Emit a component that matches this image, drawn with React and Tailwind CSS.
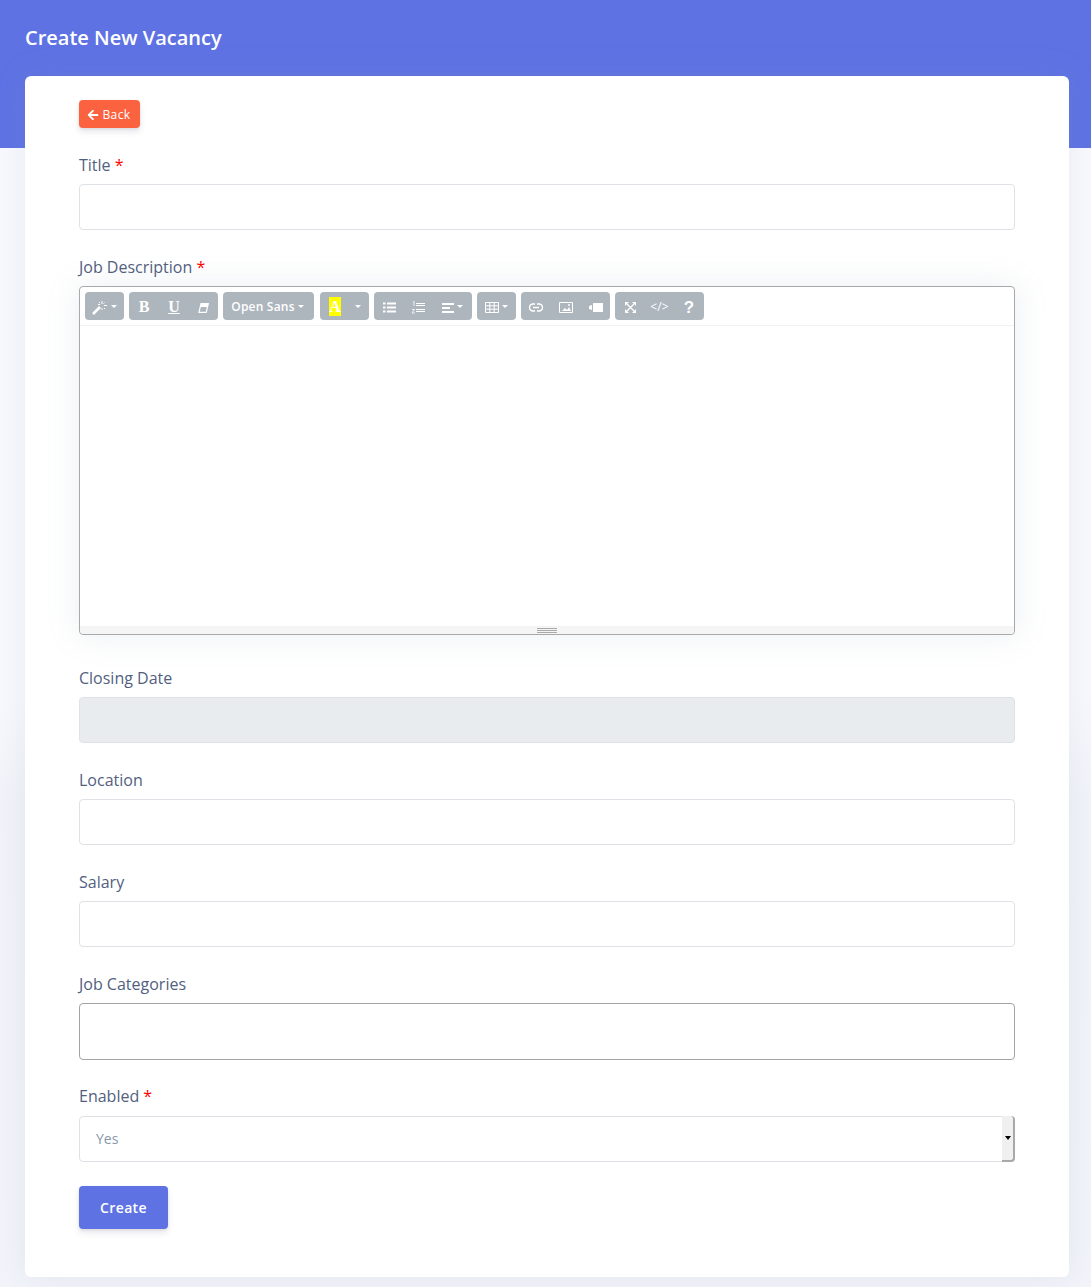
import React from "react";
import { FaArrowLeft } from "react-icons/fa";

const Caret = () => <span className="ml-[3px] inline-block w-0 h-0 border-x-[3px] border-x-transparent border-t-[3px] border-t-white" />;

function Group({ width, children }) {
  return (
    <div className={`flex items-center h-7 rounded-[4px] bg-[#adb5bd] text-white shrink-0 ${width}`}>{children}</div>
  );
}

function Btn({ className = "", children }) {
  return <span className={`flex items-center justify-center h-full pt-px ${className}`}>{children}</span>;
}

function Label({ text, required, flush }) {
  return (
    <label className={`block h-6 mb-2 text-[16px] leading-6 text-[#525f7f] ${flush ? "" : "pt-px"}`}>
      {text}
      {required && <span className="text-[#ff0000]"> *</span>}
    </label>
  );
}

function TextInput({ disabled }) {
  return (
    <input
      type="text"
      disabled={disabled}
      className={`block w-full h-[46px] rounded-[4px] border border-[#dee2e6] outline-none ${disabled ? "bg-[#e9ecef]" : "bg-white"}`}
    />
  );
}

const Ico = ({ w, h, children }) => (
  <svg viewBox={`0 0 ${w} ${h}`} width={w} height={h} className="translate-y-px" fill="none" stroke="white">
    {children}
  </svg>
);

export default function App() {
  return (
    <div className="min-h-[1287px] bg-[linear-gradient(to_bottom,#f8f9fe_0,#f8f9fe_700px,#f1f3f9_800px,#f2f4fa_100%)] font-['Open_Sans',sans-serif]">
      <header className="h-[148px] bg-[#5e72e4] px-[25px] pt-[23px]">
        <h1 className="text-[20px] leading-[30px] font-semibold text-white">Create New Vacancy</h1>
      </header>
      <main className="ml-[25px] -mt-[72px] relative w-[1044px] h-[1201px] rounded-[6px] bg-white px-[54px] pt-6 pb-12 shadow-[0_0_32px_rgba(136,152,170,0.15)]">
        <button className="flex items-center justify-center w-[61px] h-7 pt-px pr-px rounded-[4px] bg-[#fb6340] text-white text-[12px] font-medium tracking-[0.4px] shadow-[0_4px_6px_rgba(50,50,93,0.11),0_1px_3px_rgba(0,0,0,0.08)]">
          <FaArrowLeft className="w-3 h-3 mr-[3px]" />
          Back
        </button>

        <div className="mt-6">
          <Label text="Title" required />
          <TextInput />
        </div>

        <div className="mt-6">
          <Label text="Job Description" required />
          <div className="h-[349px] rounded-[4px] border border-[#a9a9a9] flex flex-col bg-white shadow-[0_0_32px_rgba(136,152,170,0.17)]">
            <div className="h-[39px] shrink-0 border-b border-[#f2f2f2] flex gap-[5px] pl-[5px] pt-[5px]">
              <Group width="w-[39px]">
                <Btn className="w-full">
                  <Ico w={16} h={15}>
                    <path d="M1 14l7-7" strokeWidth="2.6" />
                    <path d="M10 1v3M10 8v2M6 4.5h2M12 5.5h3M7 2l1 1M12.5 2.5l-1 1M12 8l1 1" strokeWidth="1" />
                  </Ico>
                  <Caret />
                </Btn>
              </Group>
              <Group width="w-[89px]">
                <Btn className="w-[30px] font-['Liberation_Serif',serif] font-bold text-[16px]">B</Btn>
                <Btn className="w-[30px] font-['Liberation_Serif',serif] font-bold text-[16px] underline">U</Btn>
                <Btn className="w-[29px]">
                  <Ico w={11} h={10}>
                    <path d="M3 .7h7.3L8.2 9.3H1z" strokeWidth="1.2" />
                    <path d="M3 .7h7.3L9.4 4H2z" fill="white" stroke="none" />
                  </Ico>
                </Btn>
              </Group>
              <Group width="w-[91px]">
                <Btn className="w-full text-[12px] font-semibold tracking-[0.2px] pr-[2px]">Open Sans<Caret /></Btn>
              </Group>
              <Group width="w-[49px] ml-px">
                <Btn className="w-[30px]">
                  <span className="w-3 h-[19px] bg-[#ffff00] flex items-center justify-center font-['Liberation_Serif',serif] font-bold text-[16px] leading-none text-white">A</span>
                </Btn>
                <Btn className="w-[13px]"><Caret /></Btn>
              </Group>
              <Group width="w-[98px]">
                <Btn className="w-[30px]">
                  <Ico w={13} h={11}>
                    <path d="M0 1.5h2.5M0 5.5h2.5M0 9.5h2.5M4 1.5h9M4 5.5h9M4 9.5h9" strokeWidth="2" />
                  </Ico>
                </Btn>
                <Btn className="w-[29px]">
                  <Ico w={13} h={13}>
                    <path d="M4 2.5h9M4 4.5h9M4 8.5h9M4 10.5h9" strokeWidth="1" />
                    <path d="M1 1l1-.5V5M0 8.5h2.5L0 12h3" strokeWidth=".8" />
                  </Ico>
                </Btn>
                <Btn className="w-[38px]">
                  <Ico w={12} h={10}>
                    <path d="M0 1h12M0 5h8M0 9h12" strokeWidth="2" />
                  </Ico>
                  <Caret />
                </Btn>
              </Group>
              <Group width="w-[39px]">
                <Btn className="w-full pr-px">
                  <Ico w={14} h={11}>
                    <path d="M.5.5h13v10H.5zM.5 3.8h13M.5 7.2h13M4.8.5v10M9.2.5v10" strokeWidth="1" />
                  </Ico>
                  <Caret />
                </Btn>
              </Group>
              <Group width="w-[89px]">
                <Btn className="w-[30px]">
                  <Ico w={14} h={9}>
                    <path d="M6 1H4a3.5 3.5 0 000 7h2M8 1h2a3.5 3.5 0 010 7H8M4 4.5h6" strokeWidth="1.5" />
                  </Ico>
                </Btn>
                <Btn className="w-[30px]">
                  <Ico w={14} h={11}>
                    <path d="M.5.5h13v10H.5z" strokeWidth="1" />
                    <path d="M3 9l3-3 2 2 2-3 2 4z" fill="white" stroke="none" />
                    <circle cx="10" cy="3" r="1" fill="white" stroke="none" />
                  </Ico>
                </Btn>
                <Btn className="w-[29px]">
                  <svg viewBox="0 0 14 9" className="w-[14px] h-[9px] translate-y-px" fill="white">
                    <path d="M4 0h10v9H4zM0 3l3-1v5l-3-1z" />
                  </svg>
                </Btn>
              </Group>
              <Group width="w-[89px]">
                <Btn className="w-[30px]">
                  <Ico w={11} h={11}>
                    <path d="M2 2l7 7M9 2l-7 7" strokeWidth="1.3" />
                    <path d="M0 0h4L0 4zM11 0H7l4 4zM0 11h4L0 7zM11 11H7l4-4z" fill="white" stroke="none" />
                  </Ico>
                </Btn>
                <Btn className="w-[29px] text-[12px] font-normal tracking-[0.2px]">&lt;/&gt;</Btn>
                <Btn className="w-[30px] font-['Liberation_Sans',sans-serif] font-bold text-[17px] translate-y-px">?</Btn>
              </Group>
            </div>
            <div className="flex-1" />
            <div className="h-2 shrink-0 bg-[#f5f5f5] flex flex-col items-center justify-center gap-px rounded-b-[4px]">
              <span className="w-5 h-px bg-[#a9a9a9]" />
              <span className="w-5 h-px bg-[#a9a9a9]" />
              <span className="w-5 h-px bg-[#a9a9a9]" />
            </div>
          </div>
        </div>

        <div className="mt-[30px]">
          <Label text="Closing Date" />
          <TextInput disabled />
        </div>

        <div className="mt-6">
          <Label text="Location" />
          <TextInput />
        </div>

        <div className="mt-6">
          <Label text="Salary" />
          <TextInput />
        </div>

        <div className="mt-6">
          <Label text="Job Categories" />
          <div className="h-[57px] rounded-[4px] border border-[#a3a3a3] bg-white" />
        </div>

        <div className="mt-6">
          <Label text="Enabled" required flush />
          <div className="relative">
            <select className="block w-full h-[46px] appearance-none rounded-[4px] border border-[#dee2e6] bg-white pl-4 pb-px text-[14px] text-[#8898aa] outline-none">
              <option>Yes</option>
            </select>
            <div className="absolute right-0 top-0 bottom-0 w-[13px] bg-[#f0f0f0] border-r-2 border-b-2 border-[#a9a9a9] rounded-r-[4px] flex items-center justify-center pointer-events-none">
              <span className="w-0 h-0 border-x-[3px] border-x-transparent border-t-[4px] border-t-black" />
            </div>
          </div>
        </div>

        <button className="block mt-6 w-[89px] h-[43px] rounded-[4px] bg-[#5e72e4] text-white text-[14px] font-semibold tracking-[0.35px] shadow-[0_4px_6px_rgba(50,50,93,0.11),0_1px_3px_rgba(0,0,0,0.08)]">
          Create
        </button>
      </main>
    </div>
  );
}
